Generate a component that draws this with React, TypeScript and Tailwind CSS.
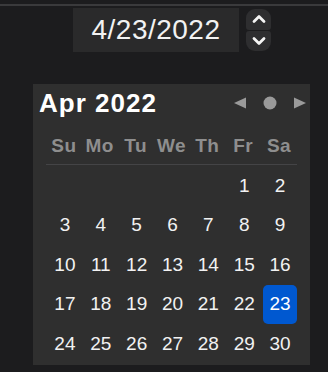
import React from 'react';

const WEEKDAYS = ['Su', 'Mo', 'Tu', 'We', 'Th', 'Fr', 'Sa'];

// April 2022 starts on a Friday
const WEEKS: (number | null)[][] = [
  [null, null, null, null, null, 1, 2],
  [3, 4, 5, 6, 7, 8, 9],
  [10, 11, 12, 13, 14, 15, 16],
  [17, 18, 19, 20, 21, 22, 23],
  [24, 25, 26, 27, 28, 29, 30],
];

const SELECTED = 23;

function Stepper() {
  return (
    <div className="flex flex-col w-[25px] h-[42px] gap-px ml-[7px]">
      <button className="flex-1 flex items-center justify-center bg-[#2e2e30] rounded-t-[9px] rounded-b-[3px]">
        <svg width="14" height="10" viewBox="0 0 14 10">
          <path d="M2 7.5 L7 2.5 L12 7.5" fill="none" stroke="#f5f5f5" strokeWidth="2.8" strokeLinecap="round" strokeLinejoin="round" />
        </svg>
      </button>
      <button className="flex-1 flex items-center justify-center bg-[#2e2e30] rounded-b-[9px] rounded-t-[3px]">
        <svg width="14" height="10" viewBox="0 0 14 10">
          <path d="M2 2.5 L7 7.5 L12 2.5" fill="none" stroke="#f5f5f5" strokeWidth="2.8" strokeLinecap="round" strokeLinejoin="round" />
        </svg>
      </button>
    </div>
  );
}

export default function App() {
  return (
    <div className="w-[328px] h-[372px] bg-[#1c1c1e] overflow-hidden font-['Liberation_Sans',Arial,sans-serif]">
      <div className="h-[4px]" />
      <div className="h-[2px] bg-[#3a3a3c]" />

      <div className="flex items-center pl-[73px] pt-[2px]">
        <div className="w-[166px] h-[44px] bg-[#2a2a2b] flex items-center justify-center text-[28px] tracking-[0.5px] text-[#f2f2f2] leading-none">
          4/23/2022
        </div>
        <Stepper />
      </div>

      <div className="ml-[33px] mt-[32px] w-[277px] h-[281px] bg-[#2f2f2f]">
        <div className="flex items-center justify-between h-[34px] pt-[4px] pl-[6px] pr-[3px]">
          <span className="text-[26px] font-bold tracking-[1px] text-white leading-none">Apr 2022</span>
          <div className="flex items-center gap-[16px]">
            <svg width="14" height="12" viewBox="0 0 14 12">
              <path d="M1 6 L13 0.5 L13 11.5 Z" fill="#9a9a9a" />
            </svg>
            <svg width="14" height="14" viewBox="0 0 14 14">
              <circle cx="7" cy="7" r="6.5" fill="#9a9a9a" />
            </svg>
            <svg width="14" height="12" viewBox="0 0 14 12">
              <path d="M13 6 L1 0.5 L1 11.5 Z" fill="#9a9a9a" />
            </svg>
          </div>
        </div>

        <div className="mx-[13px]">
          <div className="grid grid-cols-7 h-[47px] items-end pb-[7px] border-b border-[#444446]">
            {WEEKDAYS.map((d) => (
              <div key={d} className="text-center text-[19px] font-bold tracking-[0.5px] text-[#8e8e8e] leading-[22px]">
                {d}
              </div>
            ))}
          </div>

          <div className="pt-[1px]">
            {WEEKS.map((week, wi) => (
              <div key={wi} className="grid grid-cols-7 h-[39.5px]">
                {week.map((day, di) => (
                  <div key={di} className="flex items-stretch justify-center pl-[2px]">
                    {day !== null && (
                      <div
                        className={
                          day === SELECTED
                            ? 'flex-1 flex items-center justify-center rounded-[5px] bg-[#0058d0] text-[19px] text-white'
                            : 'flex-1 flex items-center justify-center text-[19px] text-[#f2f2f2]'
                        }
                      >
                        {day}
                      </div>
                    )}
                  </div>
                ))}
              </div>
            ))}
          </div>
        </div>
      </div>
    </div>
  );
}
